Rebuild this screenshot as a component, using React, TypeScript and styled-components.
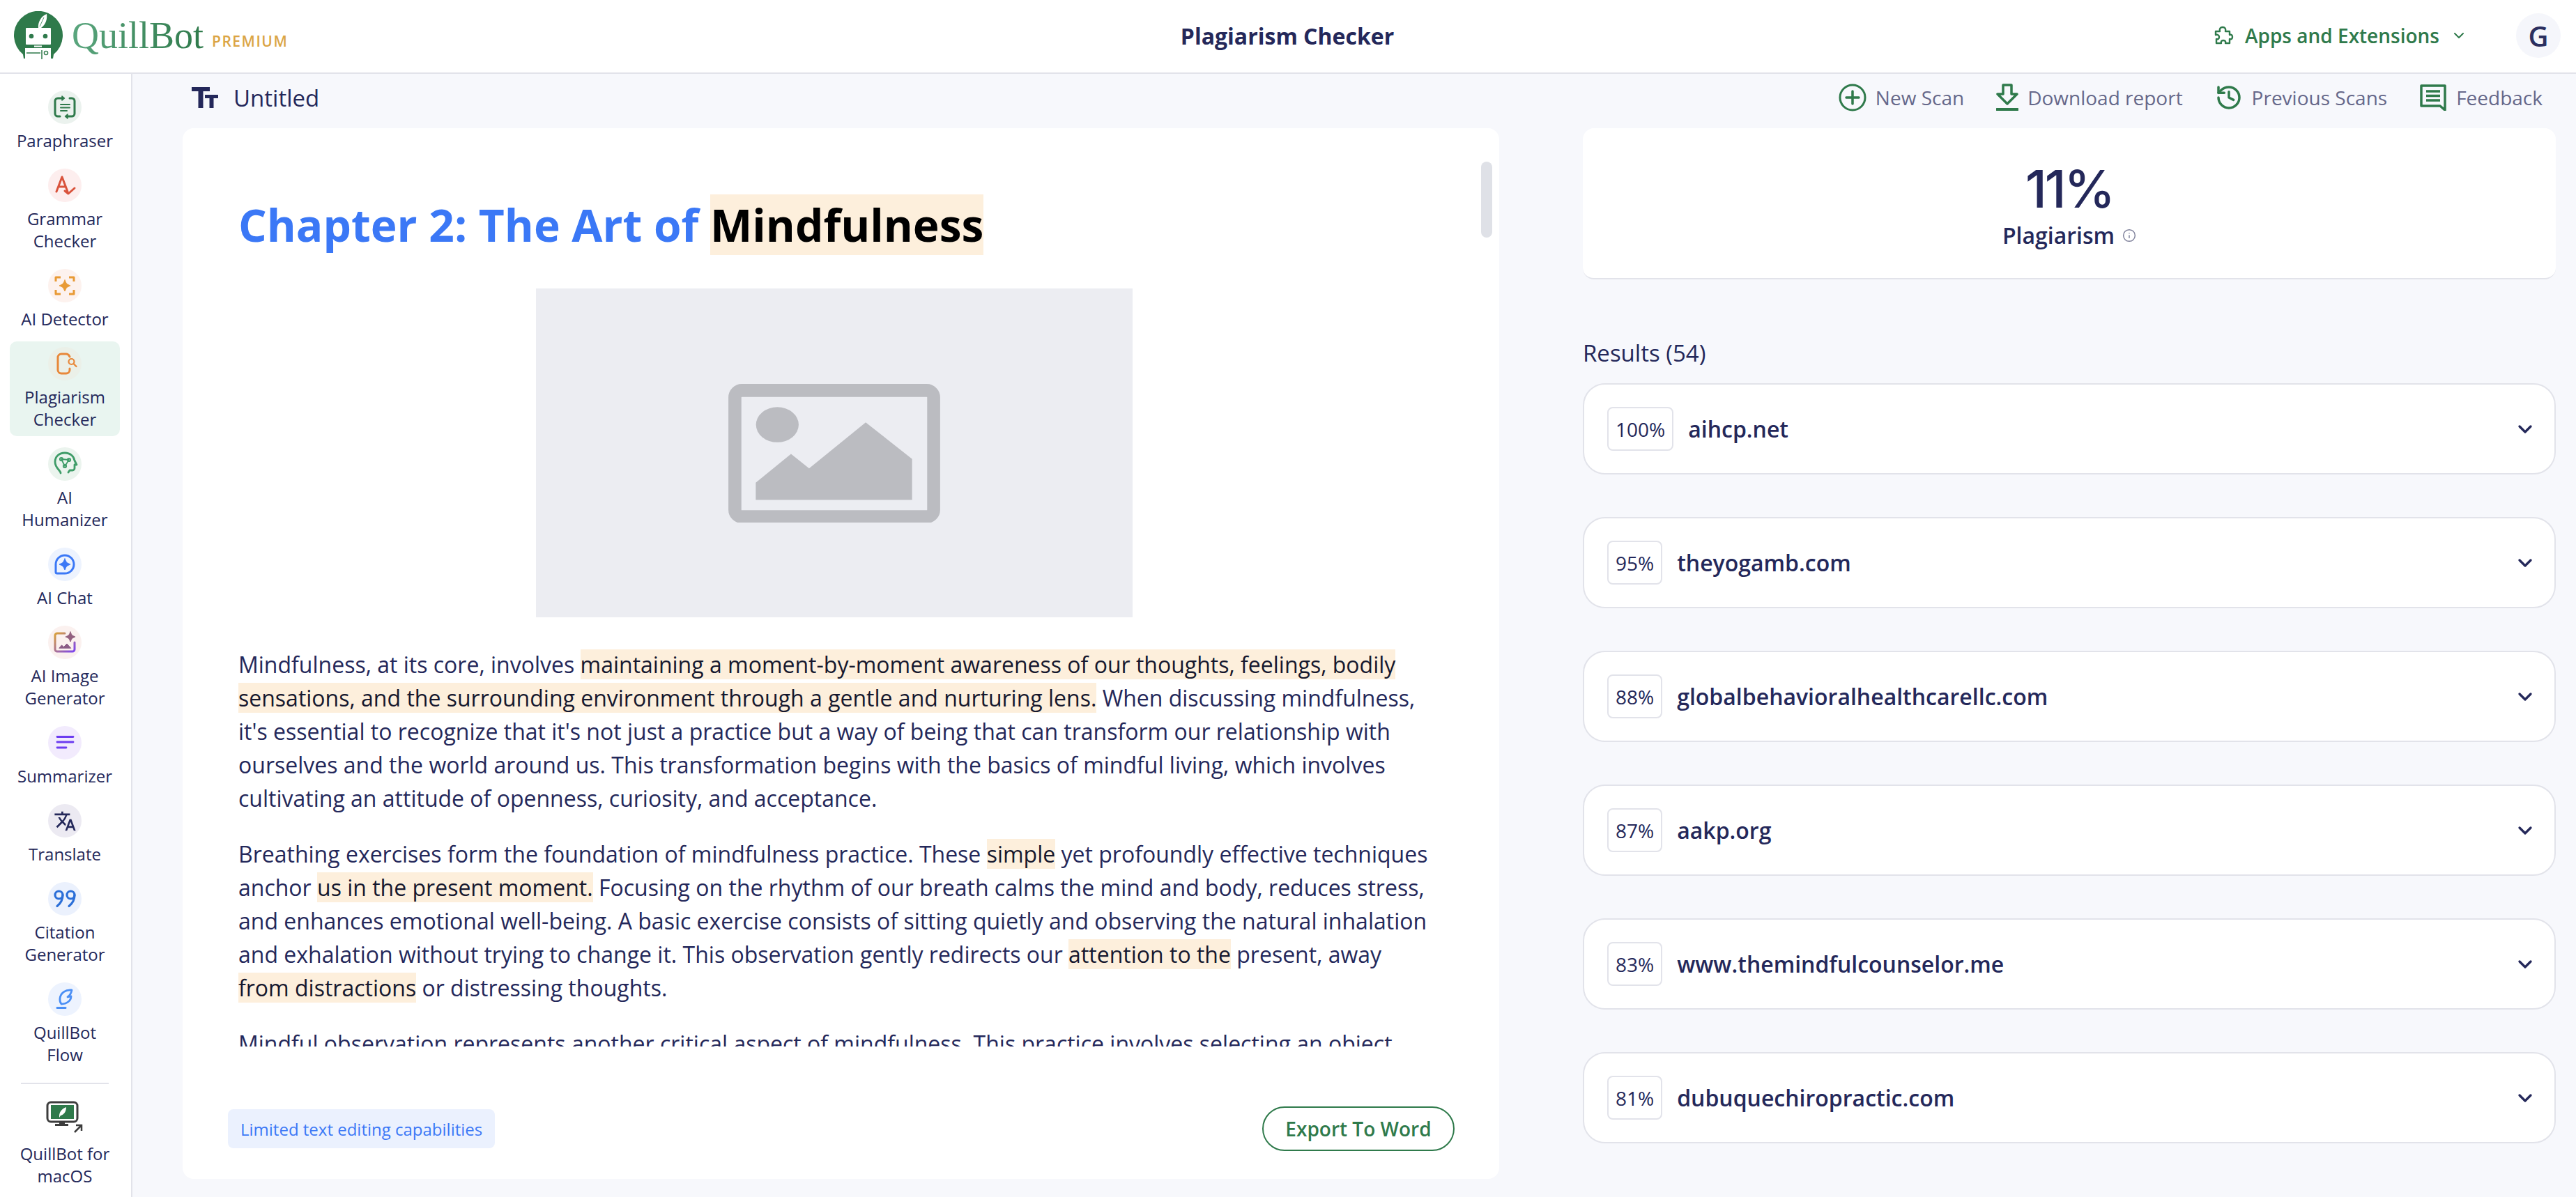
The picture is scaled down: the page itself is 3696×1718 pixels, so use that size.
import React from 'react';
import styled, { createGlobalStyle } from 'styled-components';
import { ChevronDown, History, Info } from 'lucide-react';
import { MdTranslate } from 'react-icons/md';

const NAVY = '#24285a';
const GREEN = '#2f7a4b';
const LINE = '#e2e3ea';

const GlobalStyle = createGlobalStyle`
  html, body {
    margin: 0;
    padding: 0;
    background: #f7f8fc;
  }
  * {
    box-sizing: border-box;
  }
  body {
    font-family: "Open Sans", "Liberation Sans", sans-serif;
    color: ${NAVY};
  }
`;

const LogoMark = () => (
  <svg width="70" height="70" viewBox="0 0 70 70">
    <path d="M13 62a35 35 0 1 1 44 0l-1 6H14z" fill={GREEN} />
    <path d="M35 24c-1-8 4-17 12-20 1 7-1 15-8 20z" fill="#fff" />
    <path d="M37 22l6-13" stroke={GREEN} strokeWidth="0.8" />
    <rect x="17" y="24" width="36" height="24" rx="1" fill="#fff" />
    <circle cx="25" cy="36" r="3.3" fill={GREEN} />
    <circle cx="45" cy="36" r="3.3" fill={GREEN} />
    <rect x="29" y="49.500" width="11" height="2" fill="#fff" />
    <rect x="16" y="53" width="37" height="17" fill="#fff" />
    <path d="M18 60h20M40 56v13" stroke={GREEN} strokeWidth="1.5" />
    <circle cx="46" cy="60" r="2.6" fill="none" stroke={GREEN} strokeWidth="1.4" />
  </svg>
);

const sparkle = (cx: number, cy: number, r: number) =>
  `M${cx} ${cy - r}C${cx + r * 0.3} ${cy - r * 0.3} ${cx + r * 0.3} ${cy - r * 0.3} ${cx + r} ${cy}C${cx + r * 0.3} ${cy + r * 0.3} ${cx + r * 0.3} ${cy + r * 0.3} ${cx} ${cy + r}C${cx - r * 0.3} ${cy + r * 0.3} ${cx - r * 0.3} ${cy + r * 0.3} ${cx - r} ${cy}C${cx - r * 0.3} ${cy - r * 0.3} ${cx - r * 0.3} ${cy - r * 0.3} ${cx} ${cy - r}z`;

const Glyph = styled.svg.attrs({ viewBox: '0 0 48 48', width: 48, height: 48 })`
  fill: none;
  stroke-linecap: round;
  stroke-linejoin: round;
`;

const tools = [
  {
    label: 'Paraphraser',
    bg: '#ebf2ee',
    icon: (
      <Glyph stroke={GREEN} strokeWidth="3">
        <path d="M20 11h-6a4 4 0 0 0-4 4v18a4 4 0 0 0 4 4h3M28 37h6a4 4 0 0 0 4-4V15a4 4 0 0 0-4-4h-3" />
        <path d="M20 8l3.500 3-3.500 3zM28 34l-3.500 3 3.500 3z" fill={GREEN} strokeWidth="1.5" />
        <path d="M18 20h13M18 24.500h13M18 29h9" strokeWidth="2" />
      </Glyph>
    ),
  },
  {
    label: 'Grammar\nChecker',
    bg: '#fdeeee',
    icon: (
      <Glyph stroke="#d9533c" strokeWidth="3">
        <path d="M12 33l8-21 8 21M15 26h10" />
        <path d="M24 32l5 4 9-8" />
      </Glyph>
    ),
  },
  {
    label: 'AI Detector',
    bg: '#fdf2ee',
    icon: (
      <Glyph stroke="#e89a35" strokeWidth="3">
        <path d="M11 18v-6h7M30 12h7v6M37 30v6h-7M18 36h-7v-6" strokeLinecap="butt" />
        <path d={sparkle(24, 24, 8)} fill="#e89a35" strokeWidth="1" />
      </Glyph>
    ),
  },
  {
    label: 'Plagiarism\nChecker',
    bg: '#ebf0e8',
    active: true,
    icon: (
      <Glyph stroke="#e8883a" strokeWidth="3">
        <path d="M31 14c-1-2.500-2.500-4-5-4h-7a5 5 0 0 0-5 5v18a5 5 0 0 0 5 5h7a5 5 0 0 0 5-5v-2" />
        <circle cx="33.500" cy="21" r="4" strokeWidth="2.2" />
        <path d="M36.500 24l4 4" strokeWidth="2.4" />
      </Glyph>
    ),
  },
  {
    label: 'AI\nHumanizer',
    bg: '#ebf4ee',
    icon: (
      <Glyph stroke="#3f9c68" strokeWidth="2.8">
        <path d="M18 37c0-4-8-7-8-16 0-8 6-13 14-13s13 5 14 11l3 6h-3v5a3 3 0 0 1-3 3h-4l-2 3" />
        <path d="M19 17l11 1-6 9z" strokeWidth="1.8" />
        <circle cx="19" cy="17" r="2.2" strokeWidth="1.8" />
        <circle cx="30" cy="18" r="2.2" strokeWidth="1.8" />
        <circle cx="24" cy="27" r="2.2" strokeWidth="1.8" />
      </Glyph>
    ),
  },
  {
    label: 'AI Chat',
    bg: '#edf3fe',
    icon: (
      <Glyph stroke="#3b78f6" strokeWidth="3">
        <path d="M24 11a13 13 0 1 1 0 26H13a2 2 0 0 1-2-2V24a13 13 0 0 1 13-13z" />
        <path d={sparkle(24, 24, 8)} fill="#3b78f6" strokeWidth="1" />
      </Glyph>
    ),
  },
  {
    label: 'AI Image\nGenerator',
    bg: '#fbf1ef',
    icon: (
      <Glyph stroke="url(#imgGrad)" strokeWidth="3">
        <defs>
          <linearGradient id="imgGrad" x1="0" y1="0" x2="1" y2="1">
            <stop offset="0" stopColor="#d9a13a" />
            <stop offset="1" stopColor="#7c45f0" />
          </linearGradient>
        </defs>
        <path d="M24 11H13a3 3 0 0 0-3 3v20a3 3 0 0 0 3 3h22a3 3 0 0 0 3-3V24" />
        <path d="M16 32l3.500-4 3 2.500 4.500-4.500 5.500 6z" fill="#8c5c86" stroke="#8c5c86" strokeWidth="1" />
        <path d={sparkle(32, 16, 7)} fill="#93607f" stroke="#93607f" strokeWidth="1" />
      </Glyph>
    ),
  },
  {
    label: 'Summarizer',
    bg: '#f2ebfd',
    icon: (
      <Glyph stroke="#6c3cf0" strokeWidth="2.8">
        <path d="M13 15.500h23M13 23h23M13 31h13" />
      </Glyph>
    ),
  },
  {
    label: 'Translate',
    bg: '#eceaf2',
    icon: <MdTranslate size={33} color={NAVY} />,
  },
  {
    label: 'Citation\nGenerator',
    bg: '#ebf1fd',
    icon: (
      <Glyph stroke="#2b6fd8" strokeWidth="3.2">
        <circle cx="15.500" cy="18.500" r="5.500" />
        <path d="M21 18.500c0 7-3 12-8 16" />
        <circle cx="32.500" cy="18.500" r="5.500" />
        <path d="M38 18.500c0 7-3 12-8 16" />
      </Glyph>
    ),
  },
  {
    label: 'QuillBot\nFlow',
    bg: '#edf3fe',
    icon: (
      <Glyph stroke="#4b8ff5" strokeWidth="2.8">
        <path d="M34 11c-9-1-16 4-17 12-.4 3 .5 6 2 8 8 0 14-5 14-11l-5 1c3-2 5-5 6-10z" />
        <path d="M13 36.500h12" strokeWidth="3" />
      </Glyph>
    ),
  },
];

export default function App() {
  const sources = [
    ['100%', 'aihcp.net'],
    ['95%', 'theyogamb.com'],
    ['88%', 'globalbehavioralhealthcarellc.com'],
    ['87%', 'aakp.org'],
    ['83%', 'www.themindfulcounselor.me'],
    ['81%', 'dubuquechiropractic.com'],
  ];

  return (
    <Page>
      <GlobalStyle />
      <Header>
        <Brand>
          <LogoMark />
          <Wordmark>QuillBot</Wordmark>
          <Tier>PREMIUM</Tier>
        </Brand>
        <PageTitle>Plagiarism Checker</PageTitle>
        <HeaderRight>
          <AppsLink>
            <svg width="30" height="30" viewBox="0 0 30 30" fill="none" stroke={GREEN} strokeWidth="2.4" strokeLinejoin="round">
              <path d="M4 9h6c-1-4 1-6 4-6s5 2 4 6h6v5c3-1 4 1 4 3s-1 4-4 3v6h-6c1-3-1-4-3-4s-4 1-3 4H5v-6c3 1 4-1 4-3s-2-4-5-3z" />
            </svg>
            <span>Apps and Extensions</span>
            <ChevronDown size={24} strokeWidth={2} />
          </AppsLink>
          <Avatar>G</Avatar>
        </HeaderRight>
      </Header>
      <Body>
        <Sidebar>
          {tools.map((tool) => (
            <Tool key={tool.label} $active={tool.active}>
              <ToolIcon $bg={tool.bg}>{tool.icon}</ToolIcon>
              <ToolLabel>{tool.label}</ToolLabel>
            </Tool>
          ))}
          <SideDivider />
          <Tool>
            <DesktopIcon viewBox="0 0 56 48">
              <rect x="3" y="2" width="43" height="28" rx="5" fill="none" stroke="#3d3d3d" strokeWidth="3" />
              <rect x="8" y="6" width="33" height="20" fill={GREEN} />
              <path d="M20 22c0-6 4-11 10-13 0 6-3 11-8 12l-2 3z" fill="#fff" />
              <path d="M20 30h8v3h5v3H14v-3h6z" fill="#3d3d3d" />
              <path d="M42 45l10-10M44 35h8v8" fill="none" stroke="#3d3d3d" strokeWidth="2.500" />
            </DesktopIcon>
            <ToolLabel>{'QuillBot for\nmacOS'}</ToolLabel>
          </Tool>
        </Sidebar>
        <Main>
          <TitleBar>
            <DocName>
              <svg width="38" height="30" viewBox="0 0 38 30">
                <path d="M0 0h26v6h-9.500v24h-7V6H0zM19 11h19v5h-6.500v14h-6V16H19z" fill={NAVY} />
              </svg>
              <span>Untitled</span>
            </DocName>
            <Actions>
              <Action>
                <svg width="40" height="40" viewBox="0 0 40 40" fill="none" stroke={GREEN}>
                  <circle cx="20" cy="20" r="18" strokeWidth="3" />
                  <path d="M20 11v18M11 20h18" strokeWidth="3.500" strokeLinecap="round" />
                </svg>
                New Scan
              </Action>
              <Action>
                <svg width="32" height="40" viewBox="0 0 32 40" fill="none" stroke={GREEN} strokeWidth="3.500" strokeLinejoin="round">
                  <path d="M10 2h12v13h8L16 29 2 15h8z" />
                  <path d="M1 37h30" strokeWidth="4" strokeLinecap="round" />
                </svg>
                Download report
              </Action>
              <Action>
                <History size={40} color={GREEN} strokeWidth={2.1} />
                Previous Scans
              </Action>
              <Action>
                <svg width="40" height="38" viewBox="0 0 40 38" fill="none" stroke={GREEN}>
                  <path d="M3 2h34v35l-7-6H3z" strokeWidth="3.500" strokeLinejoin="round" />
                  <path d="M10 10h20M10 16.500h20M10 23h20" strokeWidth="3.500" />
                </svg>
                Feedback
              </Action>
            </Actions>
          </TitleBar>
          <Columns>
            <EditorCard>
              <Thumb />
              <EditorScroll>
                <DocHeading>
                  Chapter 2: The Art of <HeadingMark>Mindfulness</HeadingMark>
                </DocHeading>
                <ImageSlot>
                  <svg width="306" height="199" viewBox="78 62 917 598">
                    <rect x="108" y="90" width="857" height="545" rx="30" fill="none" stroke="#bbbcc1" strokeWidth="56" />
                    <ellipse cx="291" cy="238" rx="92" ry="76" fill="#bbbcc1" />
                    <path d="M198 488l152-124 78 62 244-198 200 158v176H198z" fill="#bbbcc1" />
                  </svg>
                </ImageSlot>
                <Para>
                  Mindfulness, at its core, involves{' '}
                  <Mark>
                    maintaining a moment-by-moment awareness of our thoughts, feelings, bodily sensations, and the surrounding environment through a gentle and nurturing lens.
                  </Mark>{' '}
                  When discussing mindfulness, it's essential to recognize that it's not just a practice but a way of being that can transform our relationship with ourselves and the world around us. This transformation begins with the basics of mindful living, which involves cultivating an attitude of openness, curiosity, and acceptance.
                </Para>
                <Para>
                  Breathing exercises form the foundation of mindfulness practice. These <Mark>simple</Mark> yet profoundly effective techniques anchor <Mark>us in the present moment.</Mark> Focusing on the rhythm of our breath calms the mind and body, reduces stress, and enhances emotional well-being. A basic exercise consists of sitting quietly and observing the natural inhalation and exhalation without trying to change it. This observation gently redirects our <Mark>attention to the</Mark> present, away <Mark>from distractions</Mark> or distressing thoughts.
                </Para>
                <Para>
                  Mindful observation represents another critical aspect of mindfulness. This practice involves selecting an object
                </Para>
              </EditorScroll>
              <EditorFooter>
                <NoticePill>Limited text editing capabilities</NoticePill>
                <ExportButton>Export To Word</ExportButton>
              </EditorFooter>
            </EditorCard>
            <ResultsColumn>
              <ScoreCard>
                <ScoreValue>11%</ScoreValue>
                <ScoreLabel>
                  Plagiarism
                  <Info size={20} color="#7d7f99" strokeWidth={1.75} />
                </ScoreLabel>
              </ScoreCard>
              <ResultsTitle>Results (54)</ResultsTitle>
              <ResultList>
                {sources.map(([pct, domain]) => (
                  <ResultCard key={domain}>
                    <Percent>{pct}</Percent>
                    <Domain>{domain}</Domain>
                    <ChevronDown size={32} color={NAVY} strokeWidth={2.5} />
                  </ResultCard>
                ))}
              </ResultList>
            </ResultsColumn>
          </Columns>
        </Main>
      </Body>
    </Page>
  );
}

const Page = styled.div`
  width: 3696px;
  height: 1718px;
  overflow: hidden;
  display: flex;
  flex-direction: column;
`;

const Header = styled.header`
  height: 106px;
  flex: none;
  display: grid;
  grid-template-columns: 1fr auto 1fr;
  align-items: center;
  padding: 0 22px 2px 20px;
  background: #fff;
  border-bottom: 2px solid ${LINE};
`;

const Brand = styled.div`
  display: flex;
  align-items: center;
`;

const Wordmark = styled.span`
  margin-left: 13px;
  font-family: "Liberation Serif", serif;
  font-size: 54px;
  line-height: 1;
  background: linear-gradient(90deg, #5aa67e, #2f7a4b);
  -webkit-background-clip: text;
  background-clip: text;
  color: transparent;
`;

const Tier = styled.span`
  margin: 16px 0 0 12px;
  font-size: 21px;
  font-weight: 600;
  letter-spacing: 1.5px;
  color: #dba545;
`;

const PageTitle = styled.h1`
  margin: 0;
  font-size: 32px;
  font-weight: 700;
  color: ${NAVY};
`;

const HeaderRight = styled.div`
  display: flex;
  align-items: center;
  justify-content: flex-end;
  gap: 70px;
`;

const AppsLink = styled.div`
  display: flex;
  align-items: center;
  gap: 16px;
  font-size: 28px;
  font-weight: 600;
  color: ${GREEN};
`;

const Avatar = styled.div`
  width: 64px;
  height: 64px;
  border-radius: 50%;
  background: #f5f6fb;
  display: flex;
  align-items: center;
  justify-content: center;
  font-size: 40px;
  font-weight: 600;
  color: #2c3060;
`;

const Body = styled.div`
  flex: 1;
  min-height: 0;
  display: flex;
`;

const Sidebar = styled.nav`
  width: 190px;
  flex: none;
  display: flex;
  flex-direction: column;
  gap: 8px;
  padding: 16px 16px 0 14px;
  background: #fff;
  border-right: 2px solid ${LINE};
`;

const Tool = styled.div<{ $active?: boolean }>`
  display: flex;
  flex-direction: column;
  align-items: center;
  gap: 8px;
  padding: 8px 0;
  border-radius: 10px;
  background: ${({ $active }) => ($active ? '#e9f5f0' : 'transparent')};
`;

const ToolIcon = styled.div<{ $bg: string }>`
  width: 48px;
  height: 48px;
  border-radius: 50%;
  background: ${({ $bg }) => $bg};
  display: flex;
  align-items: center;
  justify-content: center;
`;

const ToolLabel = styled.div`
  font-size: 24px;
  line-height: 32px;
  text-align: center;
  white-space: pre-line;
  color: ${NAVY};
`;

const DesktopIcon = styled.svg`
  width: 56px;
  height: 48px;
  margin-bottom: 4px;
`;

const SideDivider = styled.div`
  height: 2px;
  margin: 8px 16px 8px 16px;
  background: ${LINE};
`;

const Main = styled.main`
  flex: 1;
  min-width: 0;
  display: flex;
  flex-direction: column;
  padding: 0 29px 0 72px;
`;

const TitleBar = styled.div`
  height: 78px;
  flex: none;
  display: flex;
  align-items: center;
  justify-content: space-between;
  padding: 0 19px 10px 13px;
`;

const DocName = styled.div`
  display: flex;
  align-items: center;
  gap: 22px;
  font-size: 33px;
  font-weight: 500;
`;

const Actions = styled.div`
  display: flex;
  align-items: center;
  gap: 46px;
`;

const Action = styled.div`
  display: flex;
  align-items: center;
  gap: 13px;
  font-size: 28px;
  color: #66688a;
`;

const Columns = styled.div`
  display: grid;
  grid-template-columns: 1889px 1396px;
  justify-content: space-between;
`;

const EditorCard = styled.section`
  position: relative;
  height: 1508px;
  display: flex;
  flex-direction: column;
  background: #fff;
  border-radius: 16px;
`;

const Thumb = styled.div`
  position: absolute;
  top: 48px;
  right: 10px;
  width: 16px;
  height: 109px;
  border-radius: 8px;
  background: #dfe1e7;
`;

const EditorScroll = styled.div`
  height: 1318px;
  flex: none;
  overflow: hidden;
  padding: 95px 100px 0 80px;
`;

const DocHeading = styled.h2`
  margin: 0 0 48px;
  font-size: 64px;
  font-weight: 700;
  line-height: 87px;
  color: #3b78f6;
`;

const HeadingMark = styled.span`
  background: #fdefdc;
  color: #000;
`;

const ImageSlot = styled.div`
  width: 856px;
  height: 472px;
  margin: 0 auto 44px;
  display: flex;
  align-items: center;
  justify-content: center;
  background: #ecedf2;
`;

const Para = styled.p`
  margin: 0 0 32px;
  font-size: 32px;
  line-height: 48px;
  color: ${NAVY};
`;

const Mark = styled.span`
  background: #fdefdc;
  color: #16182e;
`;

const EditorFooter = styled.div`
  flex: 1;
  display: flex;
  align-items: center;
  justify-content: space-between;
  padding: 46px 64px 0 65px;
`;

const NoticePill = styled.div`
  height: 56px;
  padding: 0 18px;
  display: flex;
  align-items: center;
  border-radius: 8px;
  background: #ebf1fe;
  font-size: 24px;
  color: #3b78f6;
`;

const ExportButton = styled.button`
  width: 276px;
  height: 64px;
  border: 2px solid ${GREEN};
  border-radius: 32px;
  background: #fff;
  font-family: inherit;
  font-size: 28px;
  font-weight: 600;
  color: ${GREEN};
`;

const ResultsColumn = styled.section`
  display: flex;
  flex-direction: column;
`;

const ScoreCard = styled.div`
  height: 217px;
  display: flex;
  flex-direction: column;
  align-items: center;
  padding-top: 42px;
  background: #fff;
  border-radius: 16px;
  border-bottom: 2px solid ${LINE};
`;

const ScoreValue = styled.div`
  font-family: Inter, "Open Sans", sans-serif;
  font-size: 74px;
  font-weight: 500;
  line-height: 90px;
  letter-spacing: -3px;
`;

const ScoreLabel = styled.div`
  display: flex;
  align-items: center;
  gap: 11px;
  font-size: 32px;
  font-weight: 600;
  line-height: 44px;
`;

const ResultsTitle = styled.h3`
  margin: 82px 0 19px;
  font-size: 33px;
  font-weight: 500;
  line-height: 48px;
`;

const ResultList = styled.div`
  display: flex;
  flex-direction: column;
  gap: 61px;
`;

const ResultCard = styled.div`
  height: 131px;
  display: flex;
  align-items: center;
  padding: 0 26px 0 33px;
  background: #fff;
  border: 2px solid ${LINE};
  border-radius: 32px;
`;

const Percent = styled.div`
  height: 63px;
  padding: 0 10px;
  display: flex;
  align-items: center;
  border: 2px solid ${LINE};
  border-radius: 8px;
  font-size: 28px;
  font-weight: 500;
`;

const Domain = styled.div`
  flex: 1;
  margin-left: 21px;
  font-size: 32px;
  font-weight: 600;
`;
